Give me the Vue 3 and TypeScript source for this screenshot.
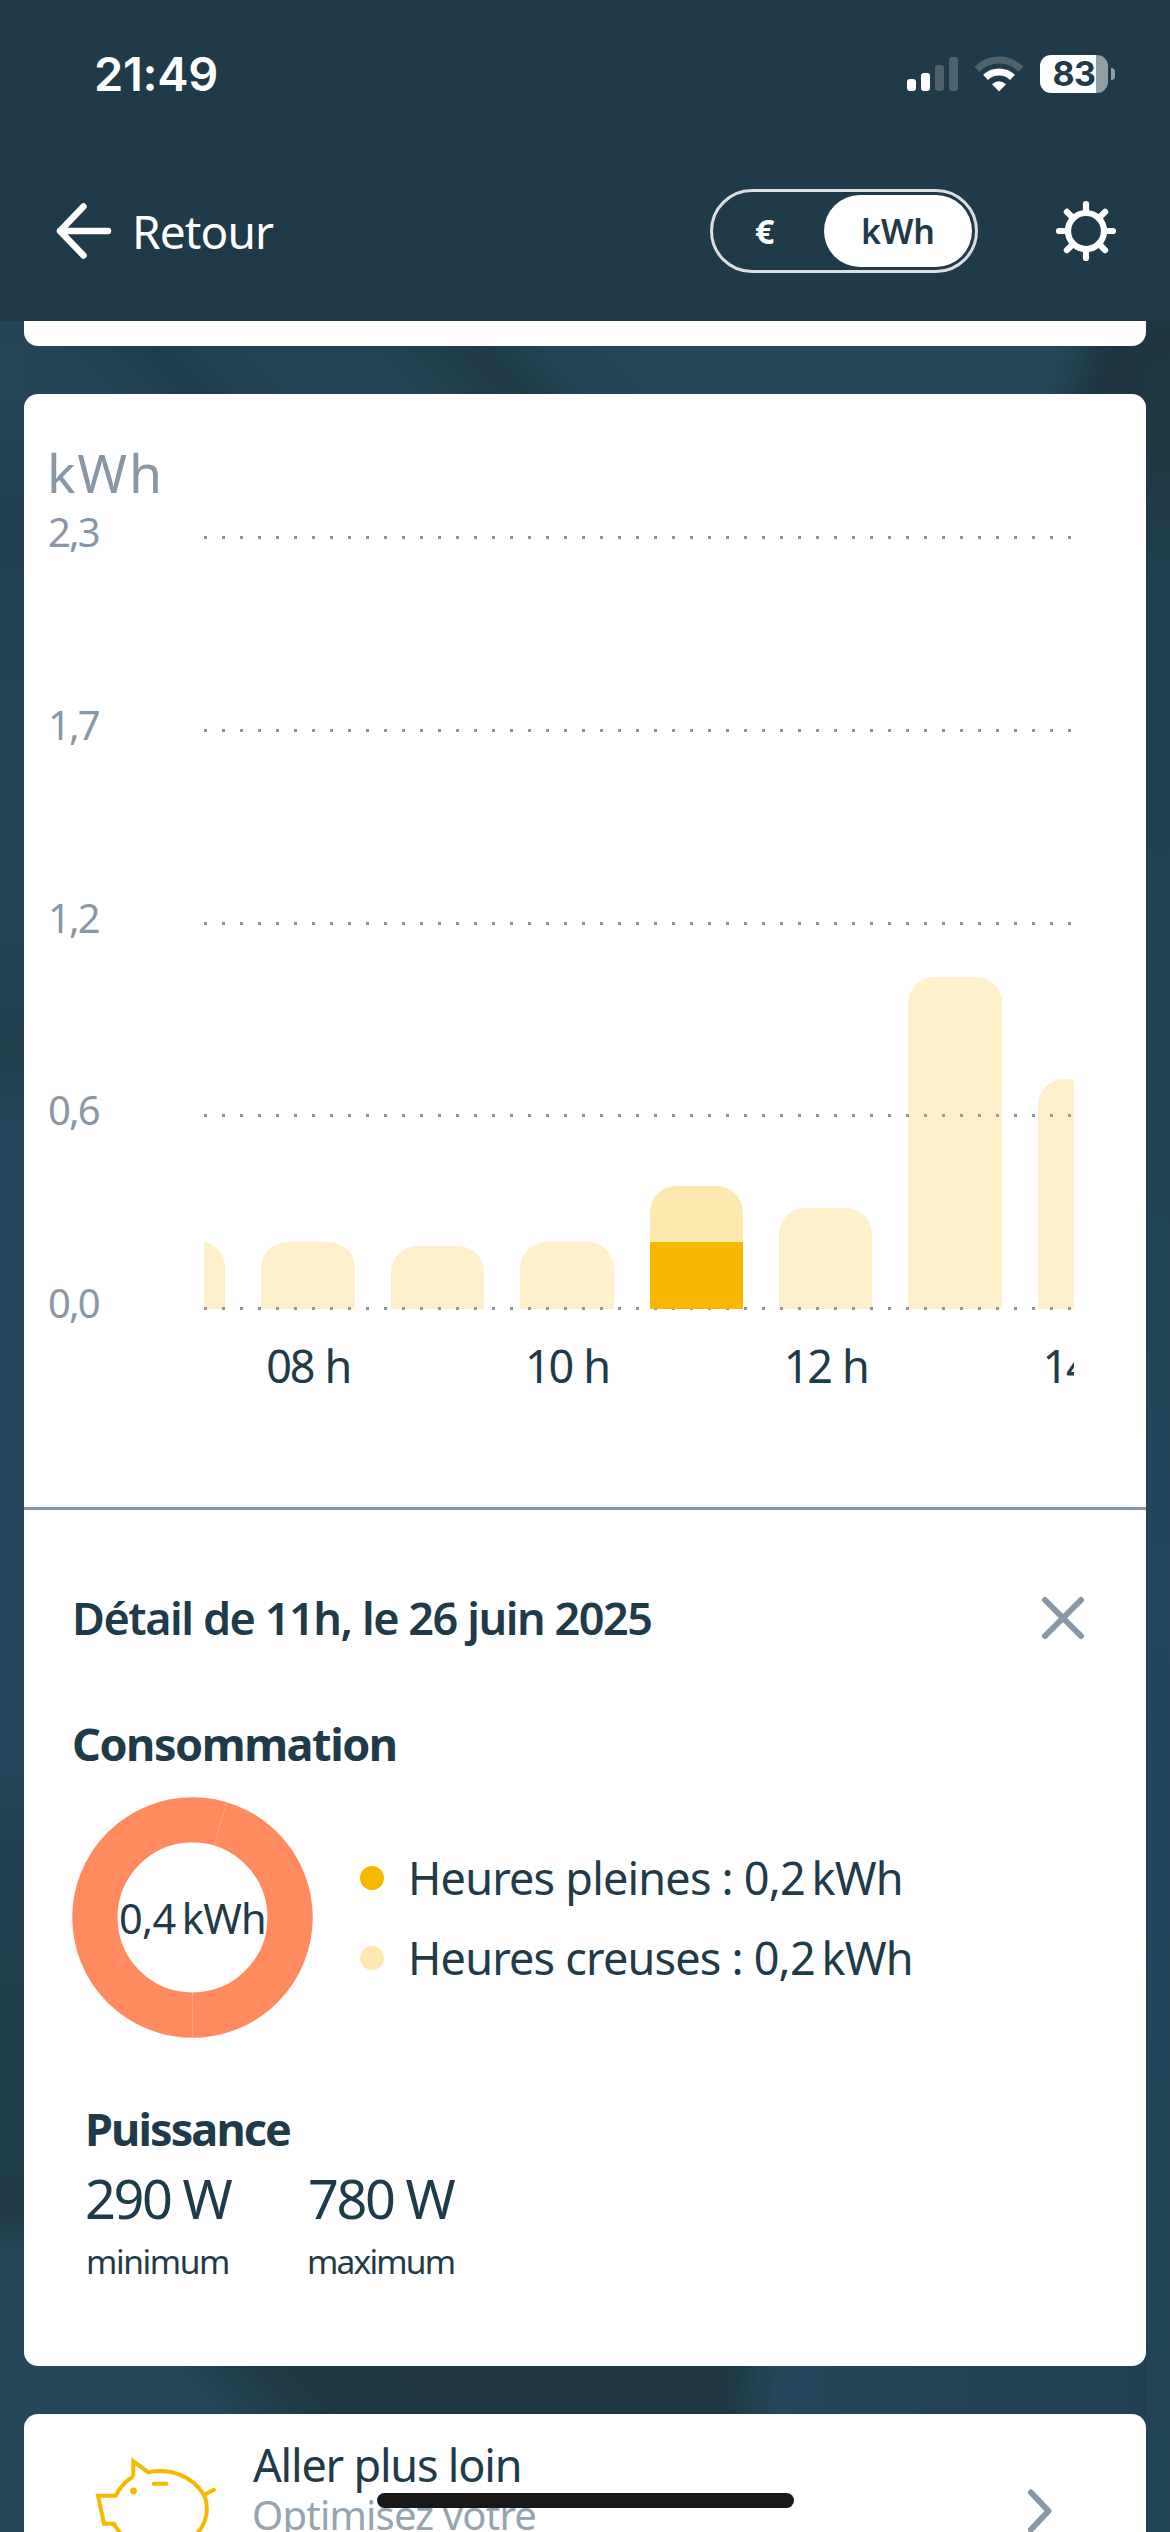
<script setup lang="ts">
interface Bar {
  hour: string
  label?: string
  offPeak: number
  peak?: number
}

const gridValues: string[] = ['2,3', '1,7', '1,2', '0,6', '0,0']

// Heights are in chart pixels
const bars: Bar[] = [
  { hour: '07', offPeak: 68 },
  { hour: '08', label: '08 h', offPeak: 67 },
  { hour: '09', offPeak: 63 },
  { hour: '10', label: '10 h', offPeak: 67 },
  { hour: '11', offPeak: 56, peak: 67 },
  { hour: '12', label: '12 h', offPeak: 101 },
  { hour: '13', offPeak: 332 },
  { hour: '14', label: '14 h', offPeak: 230 },
]

const legend = [
  { kind: 'peak', text: 'Heures pleines : 0,2\u202fkWh' },
  { kind: 'off', text: 'Heures creuses : 0,2\u202fkWh' },
]

const power = [
  { value: '290', name: 'minimum' },
  { value: '780', name: 'maximum' },
]

const rays = [0, 45, 90, 135, 180, 225, 270, 315]
</script>

<template>
  <div class="screen">
    <header class="top">
      <div class="status">
        <span class="time">21:49</span>
        <div class="indicators">
          <svg class="signal" width="51" height="36" viewBox="0 0 51 36">
            <rect x="0" y="23" width="9" height="12" rx="3" fill="#fff" />
            <rect x="14" y="17" width="9" height="18" rx="3" fill="#fff" />
            <rect x="28" y="9" width="9" height="26" rx="3" fill="#4c626d" />
            <rect x="42" y="1" width="9" height="34" rx="3" fill="#4c626d" />
          </svg>
          <svg class="wifi" width="50" height="38" viewBox="0 0 50 38">
            <path d="M3 14.200A31 31 0 0 1 47 14.200" fill="none" stroke="#4c626d" stroke-width="7" />
            <path d="M11.500 22.400A19.500 19.500 0 0 1 38.500 22.400" fill="none" stroke="#fff" stroke-width="7" />
            <path d="M25 36.500L18 29.300Q25 23.300 32 29.300Z" fill="#fff" />
          </svg>
          <div class="battery"><span>83</span></div>
          <span class="nub"></span>
        </div>
      </div>
      <nav class="nav">
        <svg class="back" width="60" height="60" viewBox="0 0 60 60">
          <path d="M54 30H6M29.500 5.500L6 30L29.500 54.500" />
        </svg>
        <span class="retour">Retour</span>
        <div class="toggle">
          <span class="euro">€</span>
          <span class="unit">kWh</span>
        </div>
        <svg class="gear" width="62" height="62" viewBox="-31 -31 62 62">
          <circle r="18" />
          <line v-for="r in rays" :key="r" x1="0" y1="-19" x2="0" y2="-27" :transform="`rotate(${r})`" />
        </svg>
      </nav>
    </header>

    <main class="content">
      <section class="card previous"></section>

      <section class="card main">
        <div class="chart">
          <div class="axis">
            <span class="axis-unit">kWh</span>
            <div class="ticks">
              <span v-for="v in gridValues" :key="v">{{ v }}</span>
            </div>
          </div>
          <div class="plot">
            <div class="grid">
              <i v-for="v in gridValues" :key="v"></i>
            </div>
            <div class="bars">
              <div v-for="b in bars" :key="b.hour" class="col">
                <div class="bar" :class="{ active: b.peak }">
                  <div class="off" :style="{ height: b.offPeak + 'px' }"></div>
                  <div v-if="b.peak" class="peak" :style="{ height: b.peak + 'px' }"></div>
                </div>
                <span class="hour">{{ b.label }}</span>
              </div>
            </div>
          </div>
        </div>

        <div class="detail">
          <div class="detail-head">
            <h2>Détail de 11h, le 26 juin 2025</h2>
            <svg width="44" height="44" viewBox="0 0 44 44" class="close">
              <path d="M4 4L40 40M40 4L4 40" />
            </svg>
          </div>
          <h3>Consommation</h3>
          <div class="usage">
            <div class="donut">
              <svg width="241" height="241" viewBox="-120.500 -120.500 241 241">
                <circle r="97.600" fill="none" stroke="#ff8a5e" stroke-width="45.300" />
                <path d="M0 75V120M21.700 -72.500L34.200 -115" stroke="#ffa583" stroke-width="1" />
              </svg>
              <span>0,4&#8239;kWh</span>
            </div>
            <ul>
              <li v-for="l in legend" :key="l.kind"><b :class="'dot-' + l.kind"></b><span>{{ l.text }}</span></li>
            </ul>
          </div>
          <h3 class="power-title">Puissance</h3>
          <div class="power">
            <div v-for="p in power" :key="p.name">
              <strong>{{ p.value }}<em>W</em></strong>
              <small>{{ p.name }}</small>
            </div>
          </div>
        </div>
      </section>

      <section class="card more">
        <svg class="pig" width="130" height="118" viewBox="90 2414 130 118">
          <path d="M133.300 2476.500V2461.300L148.300 2472.300C172 2467.500 193 2477 204 2495C209.500 2507 207.500 2524 194 2537" />
          <path d="M133.300 2476.500Q122 2483 115.700 2495.700H98L104 2523.700H114Q118.500 2532 126 2539" />
          <path d="M204 2495L214 2489.800M153.700 2483.700H166.500" stroke-linecap="round" />
          <circle cx="133.500" cy="2491" r="3.400" class="eye" />
        </svg>
        <div class="more-text">
          <span class="more-title">Aller plus loin</span>
          <span class="more-sub">Optimisez votre</span>
        </div>
        <svg class="chevron" width="30" height="48" viewBox="0 0 30 48">
          <path d="M6 5.500L23.500 24L6 42.500" />
        </svg>
      </section>
    </main>
    <div class="home"></div>
  </div>
</template>

<style>
body {
  margin: 0;
  overflow: hidden;
}
</style>

<style scoped>
.screen {
  position: relative;
  width: 1170px;
  height: 2532px;
  overflow: hidden;
  display: flex;
  flex-direction: column;
  color: #1f3a48;
  background: #234456;
  font-family: 'Noto Sans', sans-serif;
}
h2, h3, ul { margin: 0; padding: 0; }
svg { display: block; flex: none; }

.top {
  height: 321px;
  flex: none;
  background: #1f3a48;
  color: #fff;
}
.status {
  height: 148px;
  display: flex;
  justify-content: space-between;
  padding: 0 55px 0 94px;
}
.time {
  font: 600 47px/148px Inter, sans-serif;
  letter-spacing: -0.3px;
}
.indicators { display: flex; align-items: center; }
.wifi { margin-left: 16px; }
.battery {
  width: 68px;
  height: 38px;
  margin-left: 16px;
  border-radius: 11px;
  background: linear-gradient(90deg, #fff 56px, #8f9da4 56px);
  font: 700 34px/38px Inter, sans-serif;
  color: #1f3a48;
  text-align: center;
  letter-spacing: -0.5px;
}
.nub {
  width: 4px;
  height: 12px;
  margin-left: 3px;
  border-radius: 0 4px 4px 0;
  background: #8f9da4;
}
.nav {
  height: 166px;
  display: flex;
  align-items: center;
  padding: 0 53px 0 54px;
}
.back path {
  fill: none;
  stroke: #fff;
  stroke-width: 6.5;
  stroke-linecap: round;
  stroke-linejoin: round;
}
.retour {
  margin-left: 18px;
  font-size: 46px;
  letter-spacing: -0.9px;
}
.toggle {
  box-sizing: border-box;
  width: 268px;
  height: 84px;
  margin-left: auto;
  margin-right: 77px;
  border: 3px solid #dbdee3;
  border-radius: 42px;
  display: flex;
  align-items: center;
  justify-content: space-between;
  padding: 0 3px 0 42px;
  font-weight: 600;
  font-size: 34px;
}
.euro { font-weight: 700; }
.unit {
  width: 148px;
  height: 72px;
  line-height: 72px;
  border-radius: 36px;
  background: #fff;
  color: #1f3a48;
  text-align: center;
}
.gear circle, .gear line {
  fill: none;
  stroke: #fff;
  stroke-width: 6.2;
  stroke-linecap: round;
}

.content {
  flex: 1;
  padding: 0 24px;
  display: flex;
  flex-direction: column;
  gap: 48px;
  background:
    linear-gradient(180deg, #244558 0, #25475a 56px, #213f50 197px, #244457 400px, #244457 600px, #203e4e 733px, #25485c 818px, #25485c 1430px, #213f50 1530px, #203d4d 1800px, #1f3b46 1890px, #25475a 1935px, #244659 2211px) 0 0 / 24px 100% no-repeat,
    linear-gradient(180deg, #1d3641 0, #1e3842 130px, #213f51 260px, #224153 700px, #24465a 1250px, #234356 2211px) 100% 0 / 24px 100% no-repeat,
    linear-gradient(108deg, #1d364100 20px, #1d3641 70px) 1046px 0 / 100px 100px no-repeat,
    linear-gradient(45deg, #244558 60px, #203d4f 136px, #234456 200px, #234456 290px, #1e3a45 366px, #234356 405px, #26485b 490px) 24px 0 / 1122px 90px no-repeat,
    linear-gradient(45deg, #25475a 150px, #1e3a45 215px, #1e3742 300px) 24px 2030px / 500px 80px no-repeat,
    linear-gradient(92deg, #1e3742 715px, #1f3a46 735px, #25485c 780px, #244457 860px, #224053 1150px) 0 2030px / 100% 80px no-repeat,
    #234456;
}
.card {
  flex: none;
  background: #fff;
  border-radius: 14px;
}
.previous {
  height: 25px;
  border-radius: 0 0 14px 14px;
}
.main { height: 1972px; }

.chart {
  height: 1113px;
  display: flex;
  border-bottom: 3px solid #8795a3;
}
.axis {
  width: 180px;
  box-sizing: border-box;
  padding: 40px 0 0 23px;
  color: #8997a5;
}
.axis-unit {
  display: block;
  font-size: 53.5px;
  line-height: 78px;
  letter-spacing: 1.8px;
}
.ticks span {
  display: block;
  height: 192.8px;
  margin-left: 1px;
  font-size: 40px;
  line-height: 40px;
  letter-spacing: -1.9px;
}
.plot {
  position: relative;
  width: 870px;
  overflow: hidden;
}
.grid { padding-top: 142px; }
.grid i {
  display: block;
  height: 3px;
  margin-bottom: 189.8px;
  background: repeating-linear-gradient(90deg, #8795a3 0 3px, transparent 3px 18px);
}
.bars {
  position: absolute;
  left: -72px;
  top: 0;
  height: 1050px;
  display: flex;
  gap: 36px;
}
.col {
  width: 93.4px;
  flex: none;
  display: flex;
  flex-direction: column;
  align-items: center;
}
.bar {
  width: 100%;
  height: 915px;
  display: flex;
  flex-direction: column;
  justify-content: flex-end;
}
.off {
  background: rgba(255, 180, 0, 0.2);
  border-radius: 26px 26px 0 0;
}
.active .off { background: #fde9b0; }
.peak { background: #f8b700; }
.hour {
  margin-top: 26px;
  font-size: 45px;
  line-height: 62px;
  letter-spacing: -2.3px;
  word-spacing: 2px;
  white-space: nowrap;
}

.detail { padding: 77px 61px 0 48px; }
.detail-head {
  display: flex;
  align-items: center;
  justify-content: space-between;
  height: 62px;
}
h2, h3 {
  font-size: 45px;
  line-height: 62px;
  font-weight: 700;
  white-space: nowrap;
}
h2 { font-weight: 600; letter-spacing: -1.45px; }
h3 { margin-top: 64px; letter-spacing: -1.45px; }
.close path, .chevron path {
  fill: none;
  stroke: #8997a5;
  stroke-width: 6;
  stroke-linecap: round;
  stroke-linejoin: round;
}
.usage {
  display: flex;
  align-items: center;
  margin-top: 22px;
}
.donut {
  display: grid;
  place-items: center;
}
.donut > * { grid-area: 1 / 1; }
.donut span {
  font-size: 41.5px;
  letter-spacing: -0.7px;
  white-space: nowrap;
}
ul { list-style: none; margin-left: 47px; }
li {
  height: 80px;
  display: flex;
  align-items: center;
  font-size: 45px;
  letter-spacing: -0.8px;
  white-space: nowrap;
}
li b {
  width: 24px;
  height: 24px;
  margin-right: 24px;
  border-radius: 50%;
}
.dot-peak { background: #f8b700; }
.dot-off { background: #fde9b0; }
.power-title {
  margin-left: 13px;
  margin-top: 60px;
  letter-spacing: -1.9px;
}
.power { display: flex; margin-left: 14px; gap: 76px; }
.power > div { width: 147px; }
.power strong {
  display: block;
  margin-left: -1px;
  font-weight: 400;
  font-size: 54px;
  line-height: 76px;
  letter-spacing: -2.4px;
  white-space: nowrap;
}
.power em { font-style: normal; margin-left: 12px; }
.power small {
  display: block;
  font-size: 33.5px;
  line-height: 51px;
  letter-spacing: -1.4px;
}
.power > div + div small { margin-left: -2px; letter-spacing: -1.8px; }

.more {
  height: 200px;
  display: flex;
}
.pig { margin-left: 66px; }
.pig path {
  fill: none;
  stroke: #f8b700;
  stroke-width: 4;
}
.eye { fill: #f8b700; }
.more-text {
  display: flex;
  flex-direction: column;
  margin-left: 33px;
  padding-top: 20px;
  width: 700px;
}
.more-title { font-size: 45px; line-height: 62px; letter-spacing: -1.2px; }
.more-sub { margin-left: -1px; font-size: 40px; line-height: 38px; letter-spacing: -0.8px; color: #94a4b0; }
.chevron { margin: 73px 0 0 72px; }
.home {
  position: absolute;
  left: 377px;
  top: 2493px;
  width: 417px;
  height: 15px;
  border-radius: 8px;
  background: #191919;
}
</style>
